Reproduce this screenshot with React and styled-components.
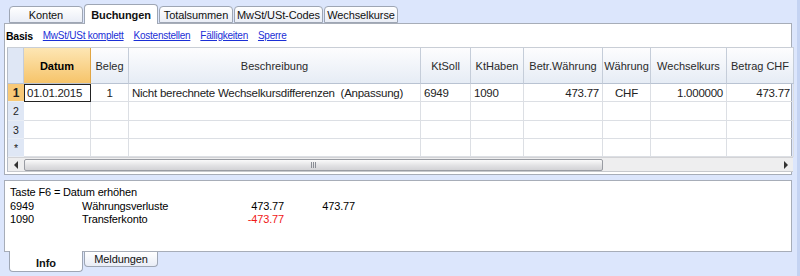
import React from 'react'
import styled, { createGlobalStyle } from 'styled-components'

const GlobalStyle = createGlobalStyle`
  html, body {
    margin: 0;
    padding: 0;
    background: #dce6fc;
  }
  body {
    font-family: "Liberation Sans", Arial, sans-serif;
    font-size: 11px;
    color: #000;
  }
`

const Page = styled.div`
  width: 800px;
  height: 276px;
  box-sizing: border-box;
  display: flex;
  flex-direction: column;
  padding: 0 5px 0 4px;
  border-right: 3px solid #c4d3f2;
  overflow: hidden;
`

const TabRow = styled.div`
  display: flex;
  align-items: ${({ $bottom }) => ($bottom ? 'flex-start' : 'flex-end')};
  height: ${({ $bottom }) => ($bottom ? '22px' : '23px')};
  padding-left: 5px;
  position: relative;
  z-index: 1;
`

const Tab = styled.div`
  box-sizing: border-box;
  width: ${({ $w }) => $w}px;
  height: ${({ $active }) => ($active ? 20 : 17)}px;
  margin-right: 1px;
  display: flex;
  align-items: center;
  justify-content: center;
  white-space: nowrap;
  font-size: 11px;
  letter-spacing: -0.1px;
  color: #111;
  font-weight: ${({ $active }) => ($active ? 700 : 400)};
  border: 1px solid #9ea6b4;
  background: ${({ $active }) =>
    $active ? '#fff' : 'linear-gradient(#ffffff, #e9edf6)'};
  ${({ $bottom, $active }) =>
    $bottom
      ? `
    border-top: none;
    border-radius: 0 0 4px 4px;
    margin-top: ${$active ? '-1px' : '0'};
    height: ${$active ? '21px' : '15px'};
    padding-top: ${$active ? '3px' : '0'};
  `
      : `
    border-bottom: ${$active ? 'none' : '1px solid #9ea6b4'};
    border-radius: 4px 4px 0 0;
    margin-bottom: ${$active ? '-1px' : '0'};
  `}
`

const Panel = styled.div`
  box-sizing: border-box;
  background: #fff;
  border: 1px solid #a7adb8;
  height: ${({ $h }) => $h}px;
  flex-shrink: 0;
`

const SubTabs = styled.div`
  display: flex;
  align-items: center;
  gap: 10px;
  height: 23px;
  padding-left: 1px;
  font-size: 10px;
  letter-spacing: -0.25px;
`

const SubTab = styled.span`
  color: ${({ $active }) => ($active ? '#000' : '#1b2fd6')};
  font-weight: ${({ $active }) => ($active ? 700 : 400)};
  font-size: ${({ $active }) => ($active ? '10.5px' : '10px')};
  text-decoration: ${({ $active }) => ($active ? 'none' : 'underline')};
`

const Grid = styled.div`
  margin-left: 2px;
  width: 786px;
  border-left: 1px solid #b5bcc7;
  border-top: 1px solid #c9ced6;
`

const cols = '16px 67px 38px 292px 50px 53px 79px 48px 76px 67px'

const Row = styled.div`
  display: grid;
  grid-template-columns: ${cols};
  height: ${({ $h }) => $h}px;
`

const HeadCell = styled.div`
  box-sizing: border-box;
  display: flex;
  align-items: center;
  justify-content: center;
  font-size: 11px;
  white-space: nowrap;
  color: ${({ $active }) => ($active ? '#000' : '#2a2a2a')};
  font-weight: ${({ $active }) => ($active ? 700 : 400)};
  border-right: 1px solid ${({ $active }) => ($active ? '#e1a543' : '#c5cdd9')};
  border-bottom: 1px solid #b9c3d2;
  background: ${({ $active, $corner }) =>
    $active
      ? 'linear-gradient(#fde6b4, #f6c46a)'
      : $corner
        ? '#dfe7f5'
        : 'linear-gradient(#fdfdfe, #e6ecf5)'};
`

const NumCell = styled.div`
  box-sizing: border-box;
  display: flex;
  align-items: center;
  justify-content: center;
  font-size: ${({ $active }) => ($active ? '12px' : '10.5px')};
  font-weight: ${({ $active }) => ($active ? 700 : 400)};
  color: #222;
  background: ${({ $active }) => ($active ? '#f8c977' : '#dfe7f5')};
  border-bottom: 1px solid #e8edf5;
`

const Cell = styled.div`
  box-sizing: border-box;
  display: flex;
  align-items: center;
  justify-content: ${({ $align }) =>
    $align === 'right' ? 'flex-end' : $align === 'center' ? 'center' : 'flex-start'};
  padding: 0 3px 0 3px;
  font-size: 11.5px;
  letter-spacing: -0.25px;
  color: #222;
  white-space: nowrap;
  overflow: hidden;
  border-right: 1px solid #dcdfe4;
  border-bottom: 1px solid #dcdfe4;
  ${({ $editing }) =>
    $editing &&
    `
    border: 1px solid #222;
    padding-left: 2px;
  `}
`

const Scrollbar = styled.div`
  margin-left: 2px;
  width: 786px;
  height: 15px;
  box-sizing: border-box;
  display: flex;
  align-items: center;
  background: #eeeeef;
  border-top: 1px solid #d3d3d6;
  border-bottom: 1px solid #c7c9cd;
  border-left: 1px solid #b5bcc7;
`

const Arrow = styled.div`
  width: 16px;
  display: flex;
  justify-content: center;
  align-items: center;
  flex-shrink: 0;
`

const Thumb = styled.div`
  width: 579px;
  height: 12px;
  box-sizing: border-box;
  border: 1px solid #999ca3;
  border-radius: 2px;
  background: linear-gradient(#fafafa, #e2e2e4 55%, #d3d3d6);
  display: flex;
  align-items: center;
  justify-content: center;
`

const Grip = styled.div`
  width: 6px;
  height: 6px;
  background: repeating-linear-gradient(90deg, #8a8d94 0 1px, transparent 1px 2px);
`

const Track = styled.div`
  flex: 1;
`

const Gap = styled.div`
  height: 5px;
  flex-shrink: 0;
`

const InfoBody = styled.div`
  padding: 5px 0 0 5px;
  font-size: 11px;
  letter-spacing: -0.15px;
  line-height: 13.5px;
`

const InfoLine = styled.div`
  display: grid;
  grid-template-columns: 72px 142px 60px 71px;
`

const Amount = styled.span`
  text-align: right;
  color: ${({ $neg }) => ($neg ? '#f01818' : '#000')};
`

const columns = [
  'Datum',
  'Beleg',
  'Beschreibung',
  'KtSoll',
  'KtHaben',
  'Betr.Währung',
  'Währung',
  'Wechselkurs',
  'Betrag CHF',
]

const ArrowIcon = ({ dir }) => (
  <svg width="5" height="8" viewBox="0 0 5 8">
    <path
      d={dir === 'left' ? 'M4 0 L0 4 L4 8 Z' : 'M1 0 L5 4 L1 8 Z'}
      fill="#333"
    />
  </svg>
)

const EmptyRow = ({ label, h }) => (
  <Row $h={h}>
    <NumCell>{label}</NumCell>
    {columns.map((c) => (
      <Cell key={c} />
    ))}
  </Row>
)

export default function App() {
  return (
    <>
      <GlobalStyle />
      <Page>
        <TabRow>
          <Tab $w={74}>Konten</Tab>
          <Tab $w={74} $active>Buchungen</Tab>
          <Tab $w={74}>Totalsummen</Tab>
          <Tab $w={89}>MwSt/USt-Codes</Tab>
          <Tab $w={74}>Wechselkurse</Tab>
        </TabRow>
        <Panel $h={152}>
          <SubTabs>
            <SubTab $active>Basis</SubTab>
            <SubTab>MwSt/USt komplett</SubTab>
            <SubTab>Kostenstellen</SubTab>
            <SubTab>Fälligkeiten</SubTab>
            <SubTab>Sperre</SubTab>
          </SubTabs>
          <Grid>
            <Row $h={36}>
              <HeadCell $corner />
              {columns.map((c, i) => (
                <HeadCell key={c} $active={i === 0}>
                  {c}
                </HeadCell>
              ))}
            </Row>
            <Row $h={18}>
              <NumCell $active>1</NumCell>
              <Cell $editing>01.01.2015</Cell>
              <Cell $align="center">1</Cell>
              <Cell>Nicht berechnete Wechselkursdifferenzen&nbsp;&nbsp;(Anpassung)</Cell>
              <Cell>6949</Cell>
              <Cell>1090</Cell>
              <Cell $align="right">473.77</Cell>
              <Cell $align="center">CHF</Cell>
              <Cell $align="right">1.000000</Cell>
              <Cell $align="right">473.77</Cell>
            </Row>
            <EmptyRow label="2" h={19} />
            <EmptyRow label="3" h={18} />
            <EmptyRow label="*" h={18} />
          </Grid>
          <Scrollbar>
            <Arrow>
              <ArrowIcon dir="left" />
            </Arrow>
            <Thumb>
              <Grip />
            </Thumb>
            <Track />
            <Arrow>
              <ArrowIcon dir="right" />
            </Arrow>
          </Scrollbar>
        </Panel>
        <Gap />
        <Panel $h={72}>
          <InfoBody>
            <div>Taste F6 = Datum erhöhen</div>
            <InfoLine>
              <span>6949</span>
              <span>Währungsverluste</span>
              <Amount>473.77</Amount>
              <Amount>473.77</Amount>
            </InfoLine>
            <InfoLine>
              <span>1090</span>
              <span>Transferkonto</span>
              <Amount $neg>-473.77</Amount>
            </InfoLine>
          </InfoBody>
        </Panel>
        <TabRow $bottom>
          <Tab $w={74} $active $bottom>Info</Tab>
          <Tab $w={74} $bottom>Meldungen</Tab>
        </TabRow>
      </Page>
    </>
  )
}
